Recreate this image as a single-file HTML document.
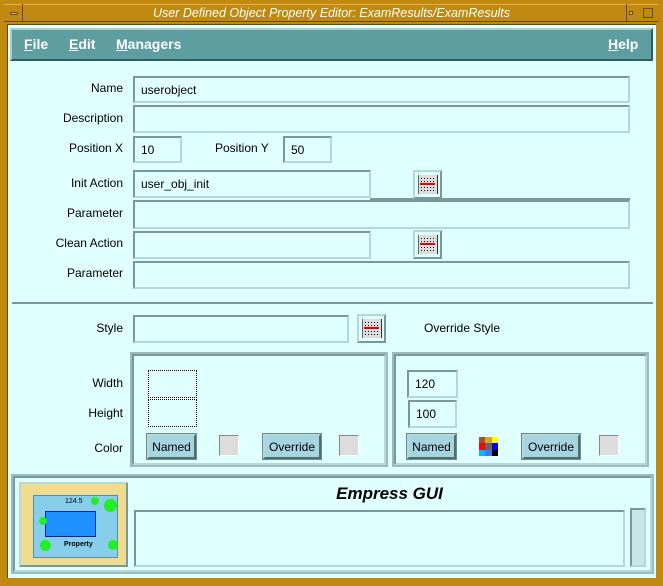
<!DOCTYPE html>
<html><head><style>
*{margin:0;padding:0;box-sizing:border-box}
body{width:663px;height:586px;background:#c08a10;position:relative;overflow:hidden;font-family:"Liberation Sans",sans-serif;font-size:12px;color:#000}
.a{position:absolute}
.f{position:absolute;border:2px solid;border-color:#7a9898 #b4d8d8 #b4d8d8 #7a9898;background:#e0ffff;padding:5px 0 0 6px;font-size:12px}
.l{position:absolute;text-align:right;width:120px;left:3px}
.ib{position:absolute;width:29px;height:29px;border:2px solid;border-color:#b4d8d8 #7a9898 #7a9898 #b4d8d8;background:#e0ffff}
.ib i{position:absolute;left:3px;top:3px;width:20px;height:19px;background:#ddd;border-left:1px solid #666;border-right:1px solid #333}
.ib i:before{content:"";position:absolute;left:2px;top:2px;width:14px;height:14px;background:repeating-linear-gradient(90deg,#000 0 1px,transparent 1px 3px);-webkit-mask:repeating-linear-gradient(0deg,#000 0 1px,transparent 1px 3px);mask:repeating-linear-gradient(0deg,#000 0 1px,transparent 1px 3px)}
.ib b{position:absolute;left:5px;top:11px;width:15px;height:2px;background:#e00}
.btn{position:absolute;height:25px;border:2px solid;border-color:#b4d8d8 #4e6e6e #4e6e6e #b4d8d8;background:#a6d4e0;text-align:center;padding-top:4px;outline:1px solid #6a8e8e}
.sw{position:absolute;width:20px;height:21px;background:#ddd;border:1px solid;border-color:#888 #fff #fff #888}
.grp{position:absolute;border:2px solid;border-color:#7a9898 #b4d8d8 #b4d8d8 #7a9898;outline:2px solid #9cbcbc}
.dot{position:absolute;border:1px dotted #000;width:49px;height:28px}
</style></head><body>
<div class="a" style="left:4px;top:4px;width:655px;height:18px;border-top:1px solid #e8b040;border-bottom:1px solid #6a4a00"></div>
<div class="a" style="left:22px;top:4px;width:1px;height:18px;background:#6a4a00"></div>
<div class="a" style="left:626px;top:4px;width:1px;height:18px;background:#6a4a00"></div>
<div class="a" style="left:10px;top:12px;width:8px;height:3px;border:1px solid #6a4a00;background:#e8b040"></div>
<div class="a" style="left:629px;top:11px;width:4px;height:4px;border:1px solid #6a4a00;background:#e8b040"></div>
<div class="a" style="left:643px;top:8px;width:10px;height:10px;border:1px solid #6a4a00"></div>
<div class="a" style="left:0;top:4px;width:663px;text-align:center;color:#fff;font-style:italic;font-size:12.5px;line-height:18px">User Defined Object Property Editor: ExamResults/ExamResults</div>
<div class="a" style="left:7px;top:24px;width:649px;height:554px;background:#e0ffff;border-left:1px solid #6a4a00;border-top:1px solid #6a4a00"></div>
<div class="a" style="left:10px;top:28px;width:643px;height:33px;background:#5f9ea0;border:2px solid;border-color:#a8d0d0 #2e5e5e #2e5e5e #a8d0d0"></div>
<div class="a" style="left:24px;top:36px;color:#fff;font-size:14px;font-weight:bold"><u>F</u>ile</div>
<div class="a" style="left:69px;top:36px;color:#fff;font-size:14px;font-weight:bold"><u>E</u>dit</div>
<div class="a" style="left:116px;top:36px;color:#fff;font-size:14px;font-weight:bold"><u>M</u>anagers</div>
<div class="a" style="left:608px;top:36px;color:#fff;font-size:14px;font-weight:bold"><u>H</u>elp</div>
<div class="l" style="top:81px">Name</div><div class="f" style="left:133px;top:76px;width:497px;height:27px">userobject</div>
<div class="l" style="top:111px">Description</div><div class="f" style="left:133px;top:105px;width:497px;height:28px"></div>
<div class="l" style="top:141px">Position X</div><div class="f" style="left:133px;top:136px;width:49px;height:27px">10</div>
<div class="a" style="left:215px;top:141px">Position Y</div><div class="f" style="left:283px;top:136px;width:49px;height:27px">50</div>
<div class="l" style="top:176px">Init Action</div><div class="f" style="left:133px;top:170px;width:238px;height:28px">user_obj_init</div>
<div class="a" style="left:370px;top:198px;width:260px;height:2px;background:#7a9898"></div>
<div class="ib" style="left:413px;top:170px"><i></i><b></b></div>
<div class="l" style="top:206px">Parameter</div><div class="f" style="left:133px;top:200px;width:497px;height:29px"></div>
<div class="l" style="top:236px">Clean Action</div><div class="f" style="left:133px;top:231px;width:238px;height:28px"></div>
<div class="ib" style="left:413px;top:230px"><i></i><b></b></div>
<div class="l" style="top:266px">Parameter</div><div class="f" style="left:133px;top:261px;width:497px;height:28px"></div>
<div class="a" style="left:12px;top:302px;width:641px;height:2px;background:#7a9898"></div>
<div class="l" style="top:321px">Style</div><div class="f" style="left:133px;top:315px;width:216px;height:28px"></div>
<div class="ib" style="left:357px;top:314px"><i></i><b></b></div>
<div class="a" style="left:424px;top:321px">Override Style</div>
<div class="grp" style="left:132px;top:354px;width:254px;height:111px"></div>
<div class="grp" style="left:394px;top:354px;width:253px;height:111px"></div>
<div class="l" style="top:376px">Width</div><div class="dot" style="left:148px;top:370px"></div>
<div class="l" style="top:406px">Height</div><div class="dot" style="left:148px;top:399px"></div>
<div class="l" style="top:441px">Color</div>
<div class="btn" style="left:147px;top:434px;width:49px">Named</div>
<div class="sw" style="left:219px;top:435px"></div>
<div class="btn" style="left:263px;top:434px;width:58px">Override</div>
<div class="sw" style="left:339px;top:435px"></div>
<div class="f" style="left:407px;top:370px;width:51px;height:28px">120</div>
<div class="f" style="left:408px;top:400px;width:49px;height:28px">100</div>
<div class="btn" style="left:407px;top:434px;width:49px">Named</div>
<div class="a" style="left:479px;top:437px;width:19px;height:19px;display:grid;grid-template-columns:repeat(3,1fr)">
<span style="background:#a0522d"></span><span style="background:#daa520"></span><span style="background:#ff0"></span>
<span style="background:#f00"></span><span style="background:#666"></span><span style="background:#00f"></span>
<span style="background:#0bf"></span><span style="background:#47e"></span><span style="background:#000"></span></div>
<div class="btn" style="left:522px;top:434px;width:58px">Override</div>
<div class="sw" style="left:599px;top:435px"></div>
<div class="grp" style="left:13px;top:476px;width:639px;height:96px"></div>
<div class="a" style="left:19px;top:482px;width:109px;height:85px;border:2px solid;border-color:#b4d8d8 #7a9898 #7a9898 #b4d8d8;background:#f0dc90"></div>
<div class="a" style="left:33px;top:495px;width:85px;height:63px;background:#87ceeb;border:1px solid #5a8aaa"></div>
<div class="a" style="left:45px;top:511px;width:51px;height:26px;background:#1e90ff;border:1px solid #0020a0"></div>
<div class="a" style="left:65px;top:498px;font-size:7px">124.5</div>
<div class="a" style="left:64px;top:541px;font-size:7px;font-weight:bold">Property</div>
<div class="a" style="left:91px;top:497px;width:8px;height:8px;border-radius:50%;background:#2e2"></div>
<div class="a" style="left:104px;top:499px;width:13px;height:13px;border-radius:50%;background:#2e2"></div>
<div class="a" style="left:39px;top:517px;width:8px;height:8px;border-radius:50%;background:#2e2"></div>
<div class="a" style="left:40px;top:540px;width:11px;height:11px;border-radius:50%;background:#2e2"></div>
<div class="a" style="left:108px;top:540px;width:10px;height:10px;border-radius:50%;background:#2e2"></div>
<div class="a" style="left:134px;top:484px;width:511px;text-align:center;font-size:17px;font-weight:bold;font-style:italic">Empress GUI</div>
<div class="f" style="left:134px;top:510px;width:491px;height:57px"></div>
<div class="a" style="left:630px;top:508px;width:16px;height:59px;border:2px solid;border-color:#7a9898 #b4d8d8 #b4d8d8 #7a9898;background:#c8e6e6"></div>
</body></html>
